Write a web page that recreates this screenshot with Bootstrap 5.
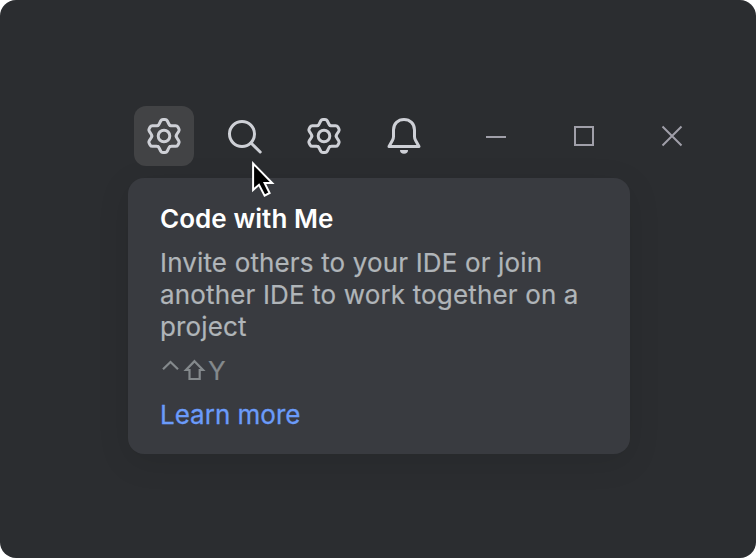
<!DOCTYPE html>
<html lang="en">
<head>
<meta charset="utf-8">
<title>Code with Me</title>
<link href="https://cdn.jsdelivr.net/npm/bootstrap@5.3.0/dist/css/bootstrap.min.css" rel="stylesheet">
<style>
body { background: #fff; font-family: Inter, sans-serif; font-size: 26px; line-height: 32px; }
.stage { width: 756px; height: 558px; background: #2b2d30; border-radius: 16px; padding: 106px 0 0 128px; }
.tools { gap: 20px; margin: 0 0 12px 6px; color: #ced0d6; }
.tool { width: 60px; height: 60px; border-radius: 12px; border: 0; padding: 0; background: none; color: inherit; }
.tool.on { background: #424345; }
.wins { margin-left: 8px; gap: 28px; color: #a09fa9; }
.tip { width: 502px; height: 276px; background: #393b40; border-radius: 16px; padding: 25px 32px 0; box-shadow: 0 8px 32px rgba(0,0,0,.1); }
.tip h1 { font-size: 26px; line-height: 32px; font-weight: 600; letter-spacing: .05px; color: #fff; margin-bottom: 12px; }
.tip p { color: #b0b5b9; margin-bottom: 12px; letter-spacing: .15px; -webkit-text-stroke: .2px; }
.keys { color: #84898c; height: 32px; margin-bottom: 12px; -webkit-text-stroke: .2px; }
.more { color: #6b9bfa; -webkit-text-stroke: .3px; }
.pointer { left: 248px; top: 156px; }
svg { display: block; fill: none; stroke: currentColor; }
</style>
<script src="https://cdn.jsdelivr.net/npm/bootstrap@5.3.0/dist/js/bootstrap.bundle.min.js"></script>
</head>
<body>
<main class="stage position-relative overflow-hidden">
  <div class="tools d-flex">
    <button class="tool on" aria-label="Code with Me">
      <svg width="60" height="60" viewBox="-30 -30 60 60" stroke-width="3" stroke-linecap="round">
        <defs>
          <path id="tooth" d="M-6.1-10.55Q-5.35-11-5-11.7L-3.2-15.2Q-2.5-16.5-1.1-16.5H1.1Q2.5-16.5 3.2-15.2L5-11.7Q5.35-11 6.1-10.55"/>
          <g id="gear"><use href="#tooth"/><use href="#tooth" transform="rotate(60)"/><use href="#tooth" transform="rotate(120)"/><use href="#tooth" transform="rotate(180)"/><use href="#tooth" transform="rotate(240)"/><use href="#tooth" transform="rotate(300)"/><circle r="5.8"/></g>
        </defs>
        <use href="#gear"/>
      </svg>
    </button>
    <button class="tool" aria-label="Search">
      <svg width="60" height="60" stroke-width="3" stroke-linecap="round"><circle cx="28" cy="28" r="12.5"/><path d="M37 37L46.2 46"/></svg>
    </button>
    <button class="tool" aria-label="Settings">
      <svg width="60" height="60" viewBox="-30 -30 60 60" stroke-width="3" stroke-linecap="round"><use href="#gear"/></svg>
    </button>
    <button class="tool" aria-label="Notifications">
      <svg width="60" height="60" stroke-width="3" stroke-linejoin="round"><path d="M19.5 24C19.5 17.8 24 13.5 30 13.5S40.500 17.800 40.500 24V30.500Q40.500 32.500 41.500 34.200L45 40.500H15L18.500 34.200Q19.500 32.500 19.500 30.500Z"/><path d="M26 44H34A4 3.800 0 0 1 26 44Z" fill="currentColor" stroke="none"/></svg>
    </button>
    <div class="wins d-flex">
      <button class="tool" aria-label="Minimize"><svg width="60" height="60" stroke-width="2"><path d="M24 31H44"/></svg></button>
      <button class="tool" aria-label="Maximize"><svg width="60" height="60" stroke-width="2"><path d="M25 21H43V39H25Z"/></svg></button>
      <button class="tool" aria-label="Close"><svg width="60" height="60" stroke-width="2"><path d="M24.500 20.500L43.500 39.500M43.500 20.500L24.500 39.500"/></svg></button>
    </div>
  </div>
  <section class="tip">
    <h1>Code with Me</h1>
    <p>Invite others to your IDE or join another IDE to work together on a project</p>
    <div class="keys d-flex">
      <svg width="48" height="32" stroke-width="2.2"><path d="M3 14.300L10.500 7L18 14.300"/><path d="M34.500 6.200L43 15H39.700V24H29.500V15H26Z"/></svg><span>Y</span>
    </div>
    <a class="more text-decoration-none" href="#">Learn more</a>
  </section>
  <svg class="pointer position-absolute" width="32" height="46"><path d="M5.100 7.500V34L11 28.800L16.600 39.600L21.600 37L16.600 27H24.200Z" fill="#000" stroke="#fff" stroke-width="2"/></svg>
</main>
</body>
</html>
